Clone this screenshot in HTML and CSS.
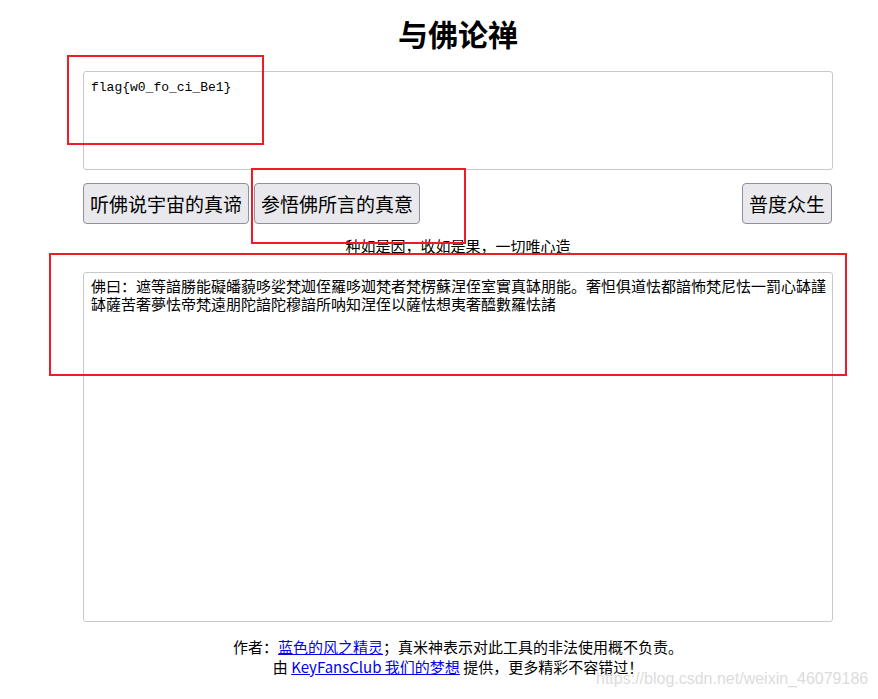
FILE: index.html
```html
<!DOCTYPE html>
<html lang="zh">
<head>
<meta charset="utf-8">
<link rel="stylesheet" href="styles.css">
</head>
<body>
<div class="page">
  <h1 class="title">与佛论禅</h1>
  <textarea class="box box-small">flag{w0_fo_ci_Be1}</textarea>
  <div class="actions">
    <button class="btn">听佛说宇宙的真谛</button>
    <button class="btn">参悟佛所言的真意</button>
    <span class="spacer"></span>
    <button class="btn">普度众生</button>
  </div>
  <p class="motto">种如是因，收如是果，一切唯心造</p>
  <textarea class="box box-large">佛曰：遮等諳勝能礙皤藐哆娑梵迦侄羅哆迦梵者梵楞蘇涅侄室實真缽朋能。奢怛俱道怯都諳怖梵尼怯一罰心缽謹缽薩苦奢夢怯帝梵遠朋陀諳陀穆諳所呐知涅侄以薩怯想夷奢醯數羅怯諸</textarea>
  <div class="footer">
    <p>作者：<a href="#">蓝色的风之精灵</a>；真米神表示对此工具的非法使用概不负责。</p>
    <p>由 <a href="#">KeyFansClub 我们的梦想</a> 提供，更多精彩不容错过！</p>
  </div>
</div>
<div class="mark mark-1"></div>
<div class="mark mark-2"></div>
<div class="mark mark-3"></div>
<div class="watermark">https://blog.csdn.net/weixin_46079186</div>
</body>
</html>
```
FILE: styles.css
```css
html, body {
  margin: 0;
  padding: 0;
  background: #fff;
}
body {
  width: 878px;
  height: 699px;
  position: relative;
  overflow: hidden;
  font-family: "Noto Sans CJK SC", "Liberation Sans", sans-serif;
  color: #000;
}
.page {
  width: 750px;
  margin-left: 83px;
  display: flex;
  flex-direction: column;
}
.title {
  margin: 11px 0 0;
  height: 44px;
  font-size: 30px;
  line-height: 44px;
  font-weight: 700;
  text-align: center;
}
.box {
  box-sizing: border-box;
  width: 750px;
  border: 1px solid #c8c8c8;
  border-radius: 3px;
  resize: none;
  line-height: 18px;
  padding: 6px 7px;
  color: #000;
  background: #fff;
  display: block;
}
.box-small {
  margin-top: 16px;
  height: 99px;
  font-family: "Liberation Mono", monospace;
  font-size: 13px;
  padding-top: 7px;
}
.box-large {
  margin-top: 16px;
  height: 350px;
  font-family: "Noto Sans CJK SC", sans-serif;
  font-size: 15px;
  padding: 4px 3px 4px 7px;
}
.actions {
  display: flex;
  gap: 5px;
  margin-top: 13px;
}
.spacer { flex: 1; }
.btn {
  height: 41px;
  padding: 0 6px;
  font-family: "Noto Sans CJK SC", sans-serif;
  font-size: 19px;
  color: #000;
  background: #e9e9ed;
  border: 1px solid #8f8f9d;
  border-radius: 4px;
}
.btn:last-child { margin-right: 1px; }
.motto {
  margin: 12px 0 0;
  font-size: 15px;
  line-height: 20px;
  text-align: center;
  height: 20px;
}
.footer {
  margin-top: 15px;
  text-align: center;
  font-size: 15px;
  line-height: 20px;
}
.footer p { margin: 0; }
.footer a { color: #0000ee; text-decoration: underline; }
.mark {
  position: absolute;
  border: 2px solid #ee1c25;
  box-sizing: border-box;
}
.mark-1 { left: 67px; top: 55px; width: 197px; height: 90px; }
.mark-2 { left: 251px; top: 168px; width: 215px; height: 76px; }
.mark-3 { left: 49px; top: 253px; width: 798px; height: 123px; }
.watermark {
  position: absolute;
  left: 596px;
  top: 670px;
  font-family: "Liberation Sans", sans-serif;
  font-size: 16px;
  color: #dcdcdc;
}
```
